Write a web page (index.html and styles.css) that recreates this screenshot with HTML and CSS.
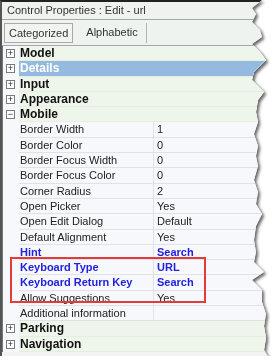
FILE: index.html
```html
<!DOCTYPE html>
<html lang="en">
<head>
    <meta charset="UTF-8">
    <title>Control Properties</title>
    <link rel="stylesheet" href="styles.css">
</head>
<body>
    <div class="frame">
        <div class="panel">
            <div class="title">Control Properties : Edit - url</div>

            <div class="tabs">
                <span class="tab active">Categorized</span>
                <span class="tab">Alphabetic</span>
                <span class="tab-sep"></span>
            </div>

            <div class="grid">
                <div class="row cat"><span class="gutter"><i class="box">+</i></span><span class="name">Model</span><span class="value"></span></div>
                <div class="row cat selected"><span class="gutter"><i class="box">+</i></span><span class="name">Details</span><span class="value"></span></div>
                <div class="row cat"><span class="gutter"><i class="box">+</i></span><span class="name">Input</span><span class="value"></span></div>
                <div class="row cat"><span class="gutter"><i class="box">+</i></span><span class="name">Appearance</span><span class="value"></span></div>
                <div class="row cat"><span class="gutter"><i class="box">&minus;</i></span><span class="name">Mobile</span><span class="value"></span></div>

                <div class="row"><span class="gutter"></span><span class="name">Border Width</span><span class="value">1</span></div>
                <div class="row"><span class="gutter"></span><span class="name">Border Color</span><span class="value">0</span></div>
                <div class="row"><span class="gutter"></span><span class="name">Border Focus Width</span><span class="value">0</span></div>
                <div class="row"><span class="gutter"></span><span class="name">Border Focus Color</span><span class="value">0</span></div>
                <div class="row"><span class="gutter"></span><span class="name">Corner Radius</span><span class="value">2</span></div>
                <div class="row"><span class="gutter"></span><span class="name">Open Picker</span><span class="value">Yes</span></div>
                <div class="row"><span class="gutter"></span><span class="name">Open Edit Dialog</span><span class="value">Default</span></div>
                <div class="row"><span class="gutter"></span><span class="name">Default Alignment</span><span class="value">Yes</span></div>
                <div class="row changed"><span class="gutter"></span><span class="name">Hint</span><span class="value">Search</span></div>

                <div class="marked">
                    <div class="row changed"><span class="gutter"></span><span class="name">Keyboard Type</span><span class="value">URL</span></div>
                    <div class="row changed"><span class="gutter"></span><span class="name">Keyboard Return Key</span><span class="value">Search</span></div>
                    <div class="row"><span class="gutter"></span><span class="name">Allow Suggestions</span><span class="value">Yes</span></div>
                    <span class="highlight"></span>
                </div>

                <div class="row"><span class="gutter"></span><span class="name">Additional information</span><span class="value"></span></div>
                <div class="row cat"><span class="gutter"><i class="box">+</i></span><span class="name">Parking</span><span class="value"></span></div>
                <div class="row cat"><span class="gutter"><i class="box">+</i></span><span class="name">Navigation</span><span class="value"></span></div>
            </div>
        </div>
    </div>
</body>
</html>
```

FILE: styles.css
```css
* {
    box-sizing: border-box;
}

body {
    margin: 0;
    background-color: #fff;
    font-family: "Liberation Sans", Arial, sans-serif;
    font-size: 11px;
    color: #222;
}

.frame {
    width: 274px;
    filter: drop-shadow(2px 2px 1.5px rgba(0, 0, 0, 0.6));
}

.panel {
    height: 356px;
    background-color: #f1f4f1;
    border-top: 2px solid #222;
    border-left: 2px solid #555;
    clip-path: polygon(0 0, 262px 0, 252px 8px, 256px 14px, 252px 22px, 260px 30px, 262px 37px, 252px 44px, 260px 52px, 266px 60px, 254px 72px, 252px 80px, 258px 86px, 264px 92px, 258px 100px, 256px 112px, 258px 122px, 254px 134px, 258px 146px, 256px 156px, 258px 166px, 254px 180px, 258px 192px, 256px 204px, 262px 214px, 256px 226px, 254px 240px, 256px 252px, 254px 262px, 264px 272px, 252px 280px, 262px 290px, 262px 302px, 266px 314px, 264px 326px, 266px 338px, 264px 350px, 268px 356px, 0 356px);
}

.title {
    height: 18px;
    padding: 2px 0 0 5px;
    border-bottom: 1px solid #a7a7a7;
    background-color: #eef3ef;
    color: #333;
    white-space: nowrap;
}

.tabs {
    display: flex;
    align-items: center;
    height: 26px;
    padding-left: 2px;
    border-bottom: 1px solid #a7a7a7;
    background-color: #eef3ef;
}

.tab {
    height: 20px;
    padding: 3px 6px 0;
    color: #333;
    font-size: 11px;
}

.tab.active {
    border: 1px solid #a9a9a9;
    background-color: #f2f4f2;
    padding: 3px 4px 0;
    margin-right: 7px;
}

.tab-sep {
    width: 1px;
    height: 20px;
    margin-left: 2px;
    background-color: #b5b5b5;
}

.grid {
    border-left: 1px solid #777;
    background-color: #f7f8fb;
}

.row {
    display: flex;
    height: 15.3px;
    line-height: 15px;
    white-space: nowrap;
}

.gutter {
    width: 16px;
    flex: none;
    display: flex;
    align-items: center;
    padding-left: 3px;
}

.box {
    width: 9px;
    height: 9px;
    border: 1px solid #7c7c7c;
    background-color: #fff;
    font-style: normal;
    font-size: 9px;
    line-height: 7px;
    text-align: center;
    color: #222;
}

.name {
    width: 135px;
    flex: none;
    padding-left: 1px;
    border-bottom: 1px solid #e2e2e6;
    border-right: 1px solid #e2e2e6;
}

.value {
    flex: 1;
    padding-left: 3px;
    border-bottom: 1px solid #e2e2e6;
}

.cat .name,
.cat .value {
    background-color: #eef5ea;
    border-color: #e6eee2;
    font-weight: bold;
    font-size: 12px;
    color: #111;
}

.cat .name {
    border-right: none;
}

.selected .name,
.selected .value {
    background-color: #94bbdf;
    color: #fff;
}

.changed .name,
.changed .value {
    font-weight: bold;
    color: #2222dd;
}

.marked {
    position: relative;
}

.highlight {
    position: absolute;
    left: 7px;
    top: -3px;
    width: 196px;
    height: 46px;
    border: 2px solid #e33a3a;
}
```
